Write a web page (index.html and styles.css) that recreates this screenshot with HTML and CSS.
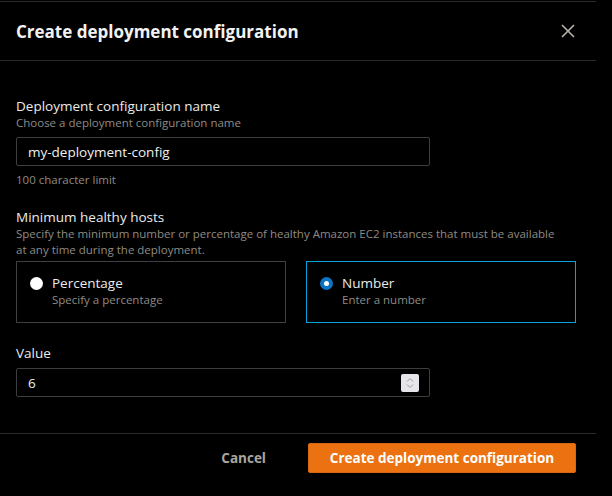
FILE: index.html
```html
<!DOCTYPE html>
<html>
<head>
<meta charset="utf-8">
<link rel="stylesheet" href="styles.css">
</head>
<body>
<div class="modal">
  <div class="header">
    <h2 class="title">Create deployment configuration</h2>
    <button class="close" aria-label="Close">
      <svg width="16" height="16" viewBox="0 0 16 16"><path d="M2 2 L14 14 M14 2 L2 14" stroke="#b9b5ad" stroke-width="1.6" fill="none"/></svg>
    </button>
  </div>
  <div class="content">
    <div class="field">
      <div class="label">Deployment configuration name</div>
      <div class="desc">Choose a deployment configuration name</div>
      <div class="input">my-deployment-config</div>
      <div class="hint">100 character limit</div>
    </div>
    <div class="field field-hosts">
      <div class="label">Minimum healthy hosts</div>
      <div class="desc">Specify the minimum number or percentage of healthy Amazon EC2 instances that must be available at any time during the deployment.</div>
      <div class="tiles">
        <div class="tile">
          <span class="radio"></span>
          <div class="tile-text">
            <div class="tile-label">Percentage</div>
            <div class="tile-desc">Specify a percentage</div>
          </div>
        </div>
        <div class="tile selected">
          <span class="radio checked"></span>
          <div class="tile-text">
            <div class="tile-label">Number</div>
            <div class="tile-desc">Enter a number</div>
          </div>
        </div>
      </div>
    </div>
    <div class="field field-value">
      <div class="label">Value</div>
      <div class="input input-num">
        <span>6</span>
        <span class="spin">
          <svg width="12" height="14" viewBox="0 0 12 14"><path d="M3 5.5 L6 2.5 L9 5.5 M3 8.5 L6 11.5 L9 8.5" stroke="#9a9a9a" stroke-width="1" fill="none"/></svg>
        </span>
      </div>
    </div>
  </div>
  <div class="footer">
    <button class="btn-link">Cancel</button>
    <button class="btn-primary">Create deployment configuration</button>
  </div>
</div>
</body>
</html>
```
FILE: styles.css
```css
* { box-sizing: border-box; }
html, body { margin: 0; padding: 0; background: #000; }
body {
  font-family: "Open Sans", "Noto Sans", sans-serif;
  color: #e9ebed;
}
.modal {
  width: 596px;
  margin-top: 1px;
  border-top: 1px solid #2a2a2a;
}
.header {
  height: 59px;
  display: flex;
  align-items: center;
  justify-content: space-between;
  padding: 0 20px 0 16px;
  border-bottom: 1px solid #2a2a2a;
}
.title {
  margin: 0;
  font-size: 17px;
  font-weight: 700;
  color: #f2f2f2;
}
.close {
  background: none;
  border: 0;
  padding: 0;
  width: 16px;
  height: 16px;
  display: flex;
}
.content {
  padding: 36px 16px 0 16px;
  height: 373px;
  border-bottom: 1px solid #2a2a2a;
}
.label {
  font-size: 13.5px;
  line-height: 18px;
  color: #ebebeb;
}
.desc {
  font-size: 11.5px;
  line-height: 16px;
  color: #8f8b85;
}
.input {
  margin-top: 6px;
  width: 414px;
  height: 29px;
  border: 1px solid #3d3d3d;
  border-radius: 2px;
  padding: 0 11px;
  font-size: 13.5px;
  display: flex;
  align-items: center;
  color: #f0f0f0;
}
.hint {
  margin-top: 6px;
  font-size: 11.5px;
  line-height: 16px;
  color: #8f8b85;
}
.field-hosts { margin-top: 20px; }
.field-hosts .desc { width: 540px; }
.tiles {
  margin-top: 3px;
  display: grid;
  grid-template-columns: 270px 270px;
  gap: 20px;
}
.tile {
  height: 62px;
  border: 1px solid #3d3f42;
  display: flex;
  align-items: flex-start;
  padding: 12px 12px 0 13px;
  gap: 9px;
}
.tile.selected { border-color: #0ba2e0; }
.radio {
  margin-top: 3px;
  width: 13px;
  height: 13px;
  border-radius: 50%;
  background: #ffffff;
  flex: none;
}
.radio.checked {
  background: #0b73c2;
  display: flex;
  align-items: center;
  justify-content: center;
}
.radio.checked::after {
  content: "";
  width: 5px;
  height: 5px;
  border-radius: 50%;
  background: #fff;
}
.tile-label {
  font-size: 13.5px;
  line-height: 18px;
  color: #ebebeb;
}
.tile-desc {
  font-size: 11.5px;
  line-height: 16px;
  color: #8f8b85;
}
.field-value { margin-top: 21px; }
.input-num {
  justify-content: space-between;
  padding-right: 10px;
}
.spin {
  width: 18px;
  height: 18px;
  background: #e6e6ea;
  border-radius: 2px;
  display: flex;
  align-items: center;
  justify-content: center;
}
.footer {
  display: flex;
  justify-content: flex-end;
  align-items: center;
  gap: 42px;
  padding: 9px 20px 0 0;
}
.btn-link {
  background: none;
  border: 0;
  font-family: inherit;
  font-size: 13.5px;
  font-weight: 700;
  color: #aaa69f;
  padding: 0;
}
.btn-primary {
  background: #ec7211;
  border: 1px solid #d96610;
  border-radius: 2px;
  width: 268px;
  height: 30px;
  font-family: inherit;
  font-size: 13.5px;
  font-weight: 700;
  color: #ffffff;
  padding: 0;
}
```
